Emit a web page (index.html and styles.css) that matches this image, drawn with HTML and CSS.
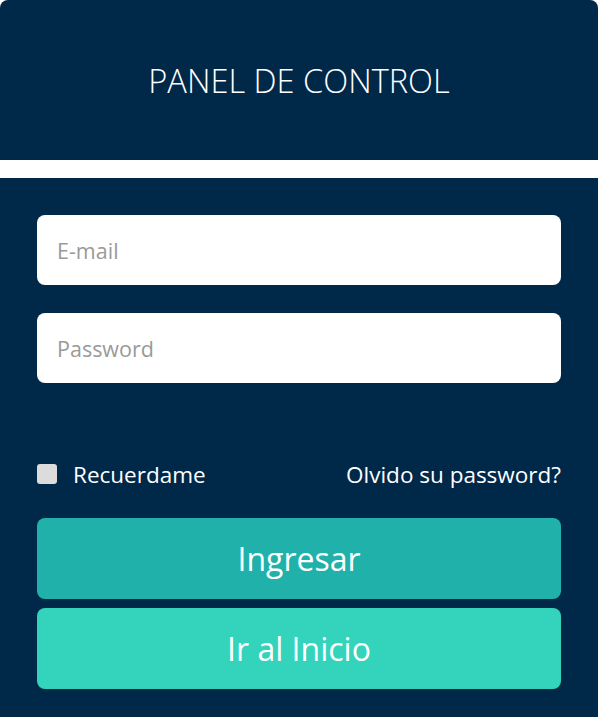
FILE: index.html
```html
<!DOCTYPE html>
<html lang="es">
<head>
<meta charset="utf-8">
<title>Panel de Control</title>
<link rel="stylesheet" href="styles.css">
</head>
<body>
<div class="panel">
  <header class="panel-header">
    <h1 class="panel-title">PANEL DE CONTROL</h1>
  </header>
  <div class="divider"></div>
  <form class="login-form">
    <input class="field" type="text" placeholder="E-mail">
    <input class="field field-second" type="password" placeholder="Password">
    <div class="options">
      <label class="remember"><span class="checkbox"></span>Recuerdame</label>
      <a class="forgot" href="#">Olvido su password?</a>
    </div>
    <button class="btn btn-primary" type="button">Ingresar</button>
    <button class="btn btn-secondary" type="button">Ir al Inicio</button>
  </form>
</div>
</body>
</html>
```

FILE: styles.css
```css
html, body {
  margin: 0;
  padding: 0;
  background: #ffffff;
}
body {
  font-family: "Open Sans", "Liberation Sans", sans-serif;
}
.panel {
  width: 598px;
  height: 717px;
  background: #002849;
  border-radius: 8px 8px 0 0;
  overflow: hidden;
}
.panel-header {
  height: 160px;
  display: flex;
  align-items: center;
  justify-content: center;
}
.panel-title {
  margin: 0;
  color: #ffffff;
  font-weight: 300;
  font-size: 32.6px;
  letter-spacing: 0;
}
.divider {
  height: 18px;
  background: #ffffff;
}
.login-form {
  padding: 37px 37px 0 37px;
  display: flex;
  flex-direction: column;
}
.field {
  box-sizing: border-box;
  height: 70px;
  border: none;
  border-radius: 8px;
  background: #ffffff;
  padding: 0 20px;
  font-family: "Open Sans", "Liberation Sans", sans-serif;
  font-size: 21.5px;
  color: #333;
  outline: none;
}
.field::placeholder {
  color: #9a9a9a;
}
.field-second {
  margin-top: 28px;
}
.options {
  margin-top: 80px;
  height: 22px;
  display: flex;
  justify-content: space-between;
  align-items: center;
  color: #ffffff;
  font-size: 22.5px;
}
.remember {
  display: flex;
  align-items: center;
}
.checkbox {
  width: 20px;
  height: 20px;
  border-radius: 3px;
  background: #dcdcdc;
  margin-right: 16px;
}
.forgot {
  color: #ffffff;
  text-decoration: none;
}
.btn {
  height: 81px;
  border: none;
  border-radius: 8px;
  color: #ffffff;
  font-family: "Open Sans", "Liberation Sans", sans-serif;
  font-size: 32px;
  cursor: pointer;
}
.btn-primary {
  margin-top: 33px;
  background: #20b2aa;
}
.btn-secondary {
  margin-top: 9px;
  background: #33d3bc;
}
```
